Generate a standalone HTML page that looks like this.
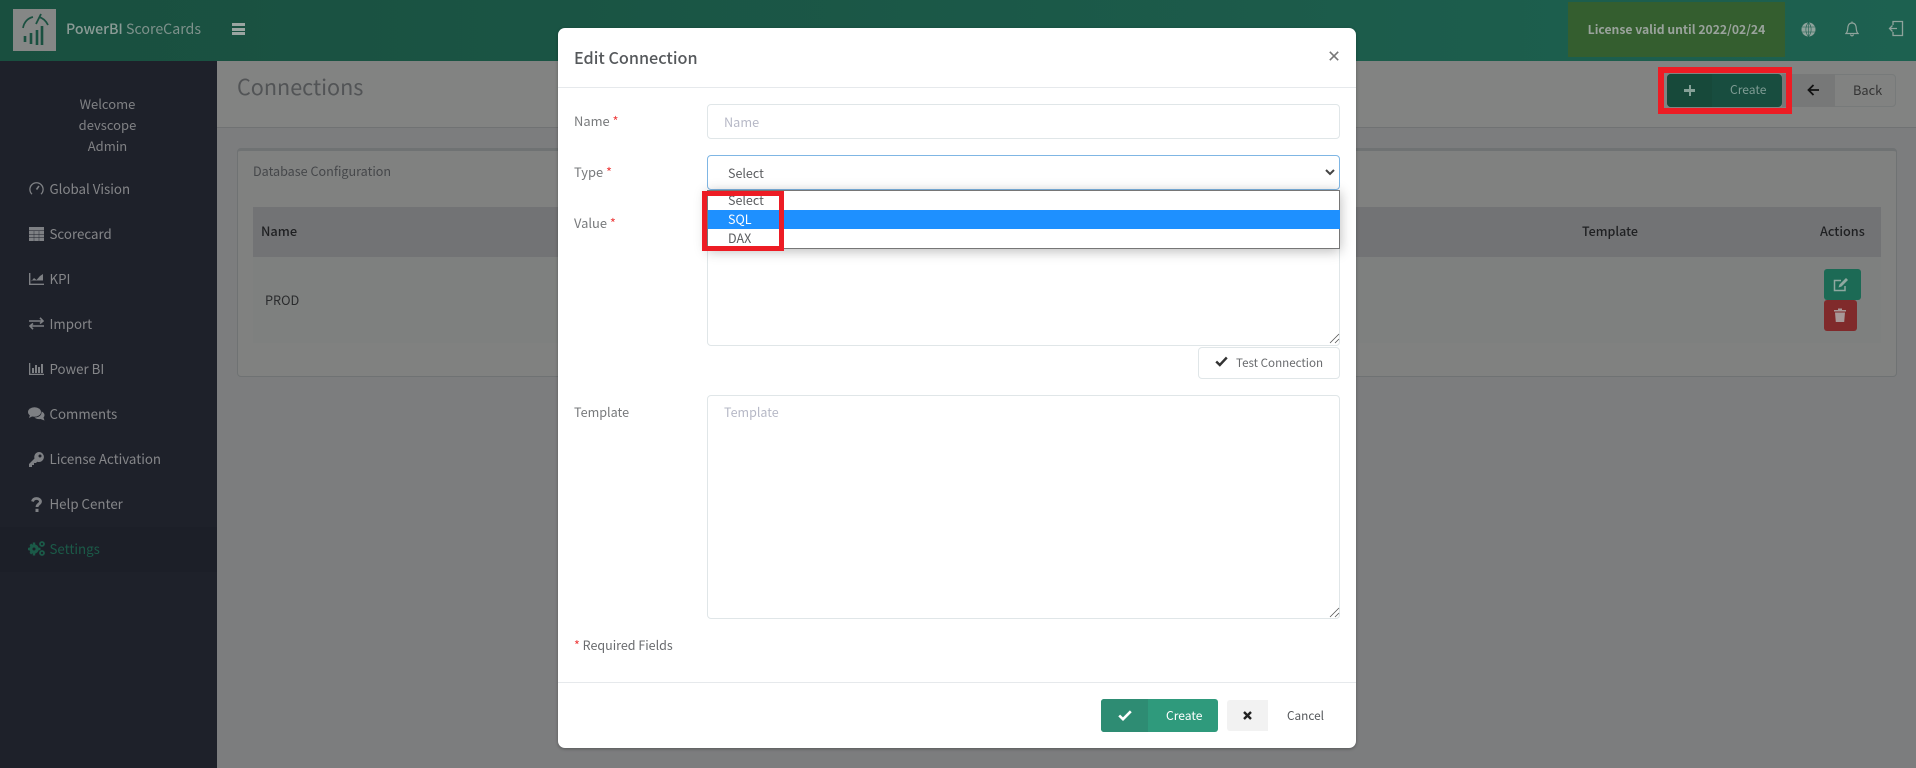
<!DOCTYPE html>
<html lang="en">
<head>
<meta charset="utf-8">
<title>Connections</title>
<style>
*{box-sizing:border-box}
html,body{margin:0;padding:0;width:1916px;height:768px;overflow:hidden;background:#7c7d7e}
body{font-family:"Noto Sans CJK JP","Noto Sans CJK SC","Liberation Sans",sans-serif;font-size:13px;color:#333;position:relative}
.a{position:absolute}
.t{position:absolute;line-height:20px;white-space:nowrap}
svg{position:absolute;display:block}
.nav{font-size:13.3px;color:#858689;left:49.5px}
.lab{font-size:12.9px;color:#77797b;left:574px}
.req{color:#ee3f3f}
.box{position:absolute;background:#fff;border:1px solid #e0e6e8;border-radius:4px}
</style>
</head>
<body>
<!-- header -->
<div class="a" style="left:0;top:0;width:1916px;height:61px;background:linear-gradient(90deg,#194f3f,#1d6150)"></div>
<div class="a" style="left:13px;top:9px;width:43px;height:42px;background:#858786"></div>
<svg style="left:13px;top:9px" width="43" height="42" viewBox="0 0 43 42" fill="none" stroke="#1a5040">
<path d="M10 19C11 13 15 9 20 8M26 8C30 9 33 12 35 16" stroke-width="1.700"/><path d="M28 5L23 15" stroke-width="1.800"/>
<path d="M12 27v6M18 24v11M24 21v15M29 17v19" stroke-width="2.600"/></svg>
<div class="t" style="left:66px;top:19px;font-size:14.2px;color:#8b9b96"><b style="font-weight:500">PowerBI</b> <span style="color:#7f928c">ScoreCards</span></div>
<div class="a" style="left:232px;top:23px;width:13px;height:3px;background:#9aa5a1"></div>
<div class="a" style="left:232px;top:27.5px;width:13px;height:3px;background:#9aa5a1"></div>
<div class="a" style="left:232px;top:32px;width:13px;height:3px;background:#9aa5a1"></div>
<div class="a" style="left:1568px;top:2px;width:217px;height:55px;background:#345e2f"></div>
<div class="t" style="left:1568px;width:217px;text-align:center;top:19px;font-size:12.2px;font-weight:700;color:#9aa39c">License valid until 2022/02/24</div>
<svg style="left:1801px;top:22px" width="15" height="15" viewBox="0 0 15 15" fill="#8fa39c"><circle cx="7.5" cy="7.5" r="7"/><path d="M1 5h13M1 10h13M7.500 .5v14M7.500 .5C4 4 4 11 7.500 14.500M7.500 .5C11 4 11 11 7.500 14.500" stroke="#1c5f4f" fill="none" stroke-width=".6"/></svg>
<svg style="left:1845px;top:21px" width="14" height="16" viewBox="0 0 14 16" fill="none" stroke="#8fa39c" stroke-width="1.2"><path d="M1 12.500C3 10.500 2.500 8 3 5.500C3.500 3 5 2 7 2s3.500 1 4 3.500C11.500 8 11 10.500 13 12.500zM5.500 13.500C6 15.300 8 15.300 8.500 13.500M7 .5V2"/></svg>
<svg style="left:1888px;top:20px" width="16" height="17" viewBox="0 0 16 17" fill="none" stroke="#8fa39c" stroke-width="1.3"><path d="M5 5V1.500h9.500v14H5V12M9 8.500H1.500M4.500 5.500l-3 3 3 3"/></svg>

<!-- sidebar -->
<div class="a" style="left:0;top:61px;width:217px;height:707px;background:#1e212a"></div>
<div class="a" style="left:0;top:527px;width:217px;height:45px;background:#1c1f28"></div>
<div class="t" style="left:0;width:215px;text-align:center;top:93.5px;font-size:13px;color:#808184">Welcome</div>
<div class="t" style="left:0;width:215px;text-align:center;top:114.5px;font-size:13px;color:#808184">devscope</div>
<div class="t" style="left:0;width:215px;text-align:center;top:135.5px;font-size:13px;color:#808184">Admin</div>

<svg style="left:29px;top:181px" width="15" height="15" viewBox="0 0 15 15" fill="none" stroke="#7e8084" stroke-width="1.300"><path d="M3 13.200A6.600 6.600 0 1 1 12 13.200"/><path d="M7.500 8.500L10 5" stroke-width="1.600"/></svg>
<div class="t nav" style="top:179px">Global Vision</div>
<svg style="left:29px;top:227px" width="15" height="14" viewBox="0 0 15 14" fill="#7e8084"><path d="M0 0h15v3.500H0zM0 4h4.800v3H0zM5.200 4h4.600v3H5.200zM10.200 4H15v3h-4.800zM0 7.500h4.800v3H0zM5.200 7.500h4.600v3H5.200zM10.200 7.500H15v3h-4.800zM0 11h4.800v3H0zM5.200 11h4.600v3H5.200zM10.200 11H15v3h-4.800z"/></svg>
<div class="t nav" style="top:224px">Scorecard</div>
<svg style="left:29px;top:273px" width="15" height="12" viewBox="0 0 15 12" fill="none" stroke="#7e8084"><path d="M.7 0v11.300H15" stroke-width="1.400"/><path d="M2 8.500l3-3.500 2.500 2L11 3l3-2v6.500H2z" fill="#7e8084" stroke="none"/></svg>
<div class="t nav" style="top:269px">KPI</div>
<svg style="left:29px;top:317px" width="15" height="13" viewBox="0 0 15 13" fill="none" stroke="#7e8084" stroke-width="1.600"><path d="M0 4h14M11 .8L14 4l-3 2.500M15 9H1M4 6.500L1 9l3 3.200"/></svg>
<div class="t nav" style="top:314px">Import</div>
<svg style="left:29px;top:363px" width="15" height="12" viewBox="0 0 15 12" fill="#7e8084"><path d="M0 0h1.300v10.700H15V12H0zM3 5h2v5H3zM6 2h2v8H6zM9 4h2v6H9zM12 1h2v9h-2z"/></svg>
<div class="t nav" style="top:359px">Power BI</div>
<svg style="left:28px;top:407px" width="17" height="14" viewBox="0 0 17 14" fill="#7e8084"><ellipse cx="6.500" cy="5" rx="6.500" ry="4.800"/><path d="M2 8L1 11l4-2z"/><path d="M13.500 4.500C16 5.500 17 7.500 16.300 9.300L15.500 10.500 16.500 13.500 12.500 12C10 12.500 7.500 11.500 6.500 10.500 10.500 10.500 14 8.500 13.500 4.500z"/></svg>
<div class="t nav" style="top:404px">Comments</div>
<svg style="left:29px;top:452px" width="15" height="15" viewBox="0 0 15 15" fill="#7e8084"><path d="M10 0a5 5 0 1 1-1.800 9.700L7 11H5v2H3v2H0v-3L5.500 6.500A5 5 0 0 1 10 0zM11 2.500a1.500 1.500 0 1 0 0 3 1.500 1.500 0 0 0 0-3z" fill-rule="evenodd"/></svg>
<div class="t nav" style="top:449px">License Activation</div>
<svg style="left:31px;top:497px" width="11" height="15" viewBox="0 0 11 15" fill="none" stroke="#7e8084" stroke-width="2.800"><path d="M1.500 4.500C2 2.500 3.500 1.500 5.500 1.500S9.500 2.800 9.500 4.500C9.500 7 6 7 6 10"/><path d="M6 11.800V15" stroke-width="3"/></svg>
<div class="t nav" style="top:494px">Help Center</div>
<svg style="left:28px;top:541px" width="17" height="15" viewBox="0 0 17 15" fill="#1b5a48"><path d="M4.800 1.500h2.400v13H4.800zM-.5 6.800h13v2.400H-.5z"/><path d="M1.500 4.200L3.200 2.500l7.300 7.300-1.700 1.700zM1.500 11.800l1.700 1.700 7.300-7.300-1.700-1.700z"/><circle cx="6" cy="8" r="4.700"/><circle cx="6" cy="8" r="1.500" fill="#1c1f28"/><circle cx="14" cy="3" r="2" fill="none" stroke="#1b5a48" stroke-width="1.800"/><circle cx="14" cy="12" r="2" fill="none" stroke="#1b5a48" stroke-width="1.800"/></svg>
<div class="t nav" style="top:539px;color:#1b5a48">Settings</div>

<!-- content -->
<div class="a" style="left:217px;top:61px;width:1699px;height:67px;background:#828382;border-bottom:1px solid #707273"></div>
<div class="t" style="left:237px;top:71.6px;line-height:30px;font-size:21.6px;color:#525456">Connections</div>

<div class="a" style="left:1782px;top:74px;width:114px;height:33px;background:#818281;border:1px solid #777a7a;border-radius:0 4px 4px 0"></div>
<div class="a" style="left:1782px;top:74px;width:53px;height:33px;background:#777878"></div>
<svg style="left:1807px;top:84px" width="13" height="12" viewBox="0 0 13 12" fill="none" stroke="#111" stroke-width="1.800"><path d="M12 6H2M6.500 1L1.500 6l5 5"/></svg>
<div class="t" style="left:1853px;top:80px;font-size:12.8px;color:#333">Back</div>

<div class="a" style="left:1667px;top:74px;width:115px;height:33px;background:#184d3f;border-radius:4px;overflow:hidden"><div style="width:45px;height:33px;background:#17493a"></div></div>
<div class="a" style="left:1684px;top:89px;width:11px;height:2.500px;background:#85a097"></div>
<div class="a" style="left:1688.500px;top:85px;width:2.500px;height:11px;background:#85a097"></div>
<div class="t" style="left:1730px;top:80px;font-size:12.1px;color:#7f9c94">Create</div>

<div class="a" style="left:1658px;top:67px;width:134px;height:47px;border:6px solid #ed1c24"></div>

<!-- card -->
<div class="a" style="left:237px;top:148px;width:1660px;height:229px;background:#808180;border:1px solid #6f7273;border-top:3px solid #6f7273;border-radius:4px"></div>
<div class="t" style="left:253px;top:161px;font-size:12.6px;color:#45474a">Database Configuration</div>
<div class="a" style="left:253px;top:207px;width:1628px;height:50px;background:#727375"></div>
<div class="a" style="left:253px;top:257px;width:1628px;height:86px;background:#7e807f"></div>
<div class="t" style="left:261px;top:221px;font-size:12.8px;font-weight:500;color:#1f2022">Name</div>
<div class="t" style="left:1582px;top:221px;font-size:12.5px;font-weight:500;color:#1f2022">Template</div>
<div class="t" style="left:1820px;top:221px;font-size:12.7px;font-weight:500;color:#1f2022">Actions</div>
<div class="t" style="left:265px;top:290px;font-size:12.7px;color:#2a2b2d">PROD</div>
<div class="a" style="left:1824px;top:269px;width:37px;height:31px;background:#1c6a55;border-radius:3px"></div>
<svg style="left:1833px;top:277px" width="17" height="15" viewBox="0 0 17 15" fill="none" stroke="#8fa8a0" stroke-width="1.500"><path d="M12 9v4.500H1.500v-10H8"/><path d="M5.500 10.500l1-3L13 1l2 2-6.500 6.500z" fill="#8fa8a0" stroke="none"/></svg>
<div class="a" style="left:1824px;top:300px;width:33px;height:31px;background:#802a2b;border-radius:3px"></div>
<svg style="left:1834px;top:308px" width="12" height="14" viewBox="0 0 12 14" fill="#a79898"><path d="M0 2h12v1.500H0zM4 .5h4V2H4zM1 4.500h10l-.8 9.500H1.800z"/></svg>

<!-- modal -->
<div class="a" style="left:558px;top:28px;width:798px;height:720px;background:#fff;border-radius:7px;box-shadow:0 1px 3px rgba(0,0,0,.3)"></div>
<div class="t" style="left:574px;top:47px;font-size:16.2px;font-weight:500;color:#55585b">Edit Connection</div>
<svg style="left:1329px;top:51px" width="10" height="10" viewBox="0 0 10 10" stroke="#777" stroke-width="1.600"><path d="M.8 .8l8.400 8.400M9.200 .8L.8 9.200"/></svg>
<div class="a" style="left:558px;top:87px;width:798px;height:1px;background:#e6e9ec"></div>

<div class="t lab" style="top:111px">Name <span class="req">*</span></div>
<div class="box" style="left:707px;top:104px;width:633px;height:35px"></div>
<div class="t" style="left:724px;top:112px;font-size:12.7px;color:#b6b8c6">Name</div>

<div class="t lab" style="top:161.5px">Type <span class="req">*</span></div>
<div class="t lab" style="top:212.5px">Value <span class="req">*</span></div>
<div class="box" style="left:707px;top:205px;width:633px;height:141px"></div>
<svg style="left:1329px;top:333px" width="11" height="11" viewBox="0 0 11 11" stroke="#555" stroke-width=".8"><path d="M1 10L10 1M6 10l4-4"/></svg>

<div class="box" style="left:707px;top:155px;width:633px;height:35px;border-color:#7fb6e4"></div>
<div class="t" style="left:728px;top:163px;font-size:12.5px;color:#5a5c5f">Select</div>
<svg style="left:1325px;top:169px" width="10" height="7" viewBox="0 0 10 7" fill="none" stroke="#444" stroke-width="2"><path d="M1 1l4 4 4-4"/></svg>

<div class="a" style="left:707px;top:190px;width:633px;height:59px;background:#fff;border:1px solid #767676;box-shadow:0 2px 12px rgba(0,0,0,.28)"></div>
<div class="a" style="left:708px;top:210px;width:632px;height:19px;background:#1e90ff"></div>
<div class="t" style="left:728px;top:189.5px;font-size:12.5px;color:#5a5c5f">Select</div>
<div class="t" style="left:728px;top:209px;font-size:12.5px;color:#fff">SQL</div>
<div class="t" style="left:728px;top:228px;font-size:12.5px;color:#5a5c5f">DAX</div>
<div class="a" style="left:702px;top:191px;width:82px;height:60px;border:5px solid #ed1c24"></div>

<div class="box" style="left:1198px;top:347px;width:142px;height:32px"></div>
<svg style="left:1215px;top:356px" width="13" height="11" viewBox="0 0 13 11" fill="none" stroke="#333" stroke-width="2.400"><path d="M1.200 5.500L4.800 9 11.800 1.500"/></svg>
<div class="t" style="left:1236px;top:353px;font-size:11.6px;color:#696b6e">Test Connection</div>

<div class="t lab" style="top:402px;font-size:12.6px">Template</div>
<div class="box" style="left:707px;top:395px;width:633px;height:224px"></div>
<div class="t" style="left:724px;top:402px;font-size:12.5px;color:#b6b8c6">Template</div>
<svg style="left:1329px;top:607px" width="11" height="11" viewBox="0 0 11 11" stroke="#555" stroke-width=".8"><path d="M1 10L10 1M6 10l4-4"/></svg>

<div class="t" style="left:574px;top:635px;font-size:12.5px;color:#696b6e"><span class="req">*</span> Required Fields</div>
<div class="a" style="left:558px;top:682px;width:798px;height:1px;background:#e6e9ec"></div>

<div class="a" style="left:1101px;top:699px;width:117px;height:33px;background:#2f9a7c;border-radius:3px;overflow:hidden"><div style="width:47px;height:33px;background:#2e8c73"></div></div>
<svg style="left:1118px;top:710px" width="14" height="11" viewBox="0 0 14 11" fill="none" stroke="#fff" stroke-width="2.600"><path d="M1.200 5.500L5 9.200 12.800 1.300"/></svg>
<div class="t" style="left:1166px;top:706px;font-size:12.1px;color:#fff">Create</div>
<div class="a" style="left:1227px;top:700px;width:41px;height:31px;background:#f2f2f2;border-radius:3px 0 0 3px"></div>
<svg style="left:1243px;top:711px" width="9" height="9" viewBox="0 0 9 9" stroke="#222" stroke-width="2.400"><path d="M1 1l7 7M8 1L1 8"/></svg>
<div class="t" style="left:1287px;top:706px;font-size:11.8px;color:#55585b">Cancel</div>
</body>
</html>
